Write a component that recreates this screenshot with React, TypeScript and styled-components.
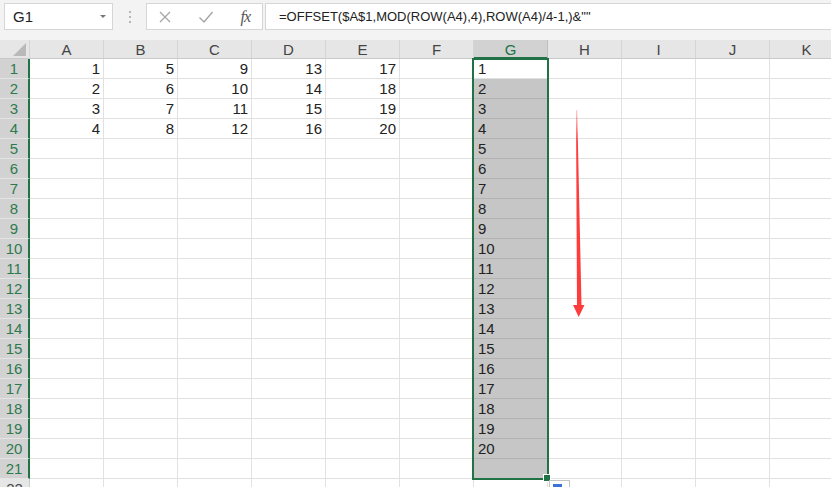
import styled, { createGlobalStyle } from 'styled-components'

const COLS = ['A', 'B', 'C', 'D', 'E', 'F', 'G', 'H', 'I', 'J', 'K']
const ROW_COUNT = 22
const SEL_COL = 'G'
const SEL_LAST_ROW = 21
const GREEN = '#217346'

const GlobalStyles = createGlobalStyle`
  html, body {
    margin: 0;
    padding: 0;
    background: #ffffff;
    overflow: hidden;
    font-family: "Liberation Sans", Arial, sans-serif;
  }
`

const Page = styled.div`
  width: 831px;
  height: 487px;
  overflow: hidden;
  display: flex;
  flex-direction: column;
`

const Toolbar = styled.div`
  height: 40px;
  flex: none;
  background: #f3f3f3;
  display: flex;
  align-items: flex-start;
  padding: 3px 0 0 4px;
  box-sizing: border-box;
`

const Field = styled.div`
  height: 27px;
  box-sizing: border-box;
  background: #ffffff;
  border: 1px solid #d6d6d6;
  display: flex;
  align-items: center;
`

const NameBox = styled(Field)`
  width: 109px;
  padding: 0 6px 0 8px;
  justify-content: space-between;
  font-size: 15px;
  color: #222;
`

const Caret = styled.span`
  width: 0;
  height: 0;
  border-left: 3px solid transparent;
  border-right: 3px solid transparent;
  border-top: 3px solid #777;
`

const Grip = styled.div`
  width: 33px;
  height: 27px;
  display: flex;
  flex-direction: column;
  align-items: center;
  justify-content: center;
  gap: 3px;

  span {
    width: 2px;
    height: 2px;
    background: #b5b5b5;
  }
`

const FxButtons = styled(Field)`
  width: 117px;
  padding: 0 12px 0 11px;
  justify-content: space-between;
  color: #9d9d9d;
`

const FxLabel = styled.span`
  font-family: "Liberation Serif", "Times New Roman", serif;
  font-style: italic;
  font-size: 16px;
  color: #555;
  letter-spacing: -1px;
`

const FormulaInput = styled(Field)`
  flex: 1;
  margin-left: 2px;
  padding-left: 13px;
  font-size: 13px;
  color: #222;
  border-right: none;
`

const Sheet = styled.div`
  position: relative;
  flex: 1;
  display: grid;
  grid-template-columns: 30px repeat(11, 74px);
  grid-template-rows: 19px;
  grid-auto-rows: 20px;
  font-size: 15px;
`

const Corner = styled.div`
  position: relative;
  background: #e6e6e6;
  border-right: 1px solid #d4d4d4;
  border-bottom: 1px solid #c9c9c9;
  box-sizing: border-box;

  &::after {
    content: '';
    position: absolute;
    right: 3px;
    bottom: 2px;
    width: 0;
    height: 0;
    border-left: 13px solid transparent;
    border-bottom: 13px solid #b9b9b9;
  }
`

const ColHeader = styled.div<{ $active?: boolean }>`
  box-sizing: border-box;
  display: flex;
  align-items: center;
  justify-content: center;
  background: ${p => (p.$active ? '#d2d2d2' : '#e6e6e6')};
  color: ${p => (p.$active ? GREEN : '#444')};
  border-right: 1px solid ${p => (p.$active ? '#bdbdbd' : '#d4d4d4')};
  border-bottom: ${p => (p.$active ? `2px solid ${GREEN}` : '1px solid #c9c9c9')};
  padding-top: ${p => (p.$active ? '1px' : '0')};
`

const RowHeader = styled.div<{ $active?: boolean }>`
  box-sizing: border-box;
  display: flex;
  align-items: flex-end;
  justify-content: center;
  padding-bottom: 1px;
  background: ${p => (p.$active ? '#d2d2d2' : '#e6e6e6')};
  color: ${p => (p.$active ? '#2e7a4f' : '#444')};
  border-bottom: 1px solid ${p => (p.$active ? '#e4e4e4' : '#d4d4d4')};
  border-right: ${p => (p.$active ? `2px solid ${GREEN}` : '1px solid #c9c9c9')};
`

const Cell = styled.div<{ $shaded?: boolean; $left?: boolean }>`
  box-sizing: border-box;
  display: flex;
  align-items: flex-end;
  justify-content: ${p => (p.$left ? 'flex-start' : 'flex-end')};
  padding: 0 3px 1px 4px;
  color: #222;
  background: ${p => (p.$shaded ? '#c6c6c6' : '#ffffff')};
  border-right: 1px solid ${p => (p.$shaded ? '#c6c6c6' : '#e1e1e1')};
  border-bottom: 1px solid ${p => (p.$shaded ? '#b3b3b3' : '#e1e1e1')};
`

const Selection = styled.div`
  position: absolute;
  left: 472px;
  top: 18px;
  width: 77px;
  height: 422px;
  box-sizing: border-box;
  border: 2px solid ${GREEN};
  pointer-events: none;
`

const FillHandle = styled.div`
  position: absolute;
  right: -4px;
  bottom: -4px;
  width: 6px;
  height: 6px;
  background: ${GREEN};
  border: 1px solid #ffffff;
`

const PasteOptions = styled.div`
  position: absolute;
  left: 549px;
  top: 440px;
  width: 21px;
  height: 20px;
  box-sizing: border-box;
  background: #ffffff;
  border: 1px solid #c4c4c4;

  &::before {
    content: '';
    position: absolute;
    left: 3px;
    top: 3px;
    width: 9px;
    height: 4px;
    background: #3b73d9;
  }
`

const Arrow = styled.svg`
  position: absolute;
  left: 570px;
  top: 70px;
  overflow: visible;
`

const cellValue = (col: string, row: number): string => {
  const idx = COLS.indexOf(col)
  if (idx <= 4 && row <= 4) return String(row + idx * 4)
  if (col === SEL_COL && row <= 20) return String(row)
  return ''
}

const App = () => {
  const rows = Array.from({ length: ROW_COUNT }, (_, i) => i + 1)

  return (
    <>
      <GlobalStyles />
      <Page>
        <Toolbar>
          <NameBox>
            G1
            <Caret />
          </NameBox>
          <Grip>
            <span />
            <span />
            <span />
          </Grip>
          <FxButtons>
            <svg width="14" height="14" viewBox="0 0 14 14">
              <path d="M2 2 L12 12 M12 2 L2 12" stroke="#a5a5a5" strokeWidth="1.3" fill="none" />
            </svg>
            <svg width="16" height="14" viewBox="0 0 16 14">
              <path d="M1.5 7.5 L6 12 L14.5 2" stroke="#a5a5a5" strokeWidth="1.4" fill="none" />
            </svg>
            <FxLabel>fx</FxLabel>
          </FxButtons>
          <FormulaInput>=OFFSET($A$1,MOD(ROW(A4),4),ROW(A4)/4-1,)&amp;""</FormulaInput>
        </Toolbar>
        <Sheet>
          <Corner />
          {COLS.map(c => (
            <ColHeader key={c} $active={c === SEL_COL}>
              {c}
            </ColHeader>
          ))}
          {rows.map(r => (
            <Row key={r} row={r} />
          ))}
          <Selection>
            <FillHandle />
          </Selection>
          <PasteOptions />
          <Arrow width="18" height="207" viewBox="0 0 18 207">
            <defs>
              <linearGradient id="arrowFade" x1="0" y1="0" x2="0" y2="1">
                <stop offset="0" stopColor="#ff3c3c" stopOpacity="0.25" />
                <stop offset="0.15" stopColor="#ff3c3c" stopOpacity="1" />
                <stop offset="1" stopColor="#ff3c3c" stopOpacity="1" />
              </linearGradient>
            </defs>
            <polygon
              points="6,0 7.2,0 11.5,195 14.5,195 8.7,207 3,195 7,195"
              fill="url(#arrowFade)"
            />
          </Arrow>
        </Sheet>
      </Page>
    </>
  )
}

const Row = ({ row }: { row: number }) => {
  const active = row <= SEL_LAST_ROW
  return (
    <>
      <RowHeader $active={active}>{row}</RowHeader>
      {COLS.map(c => {
        const inSel = c === SEL_COL && active
        return (
          <Cell key={c} $shaded={inSel && row > 1} $left={c === SEL_COL}>
            {cellValue(c, row)}
          </Cell>
        )
      })}
    </>
  )
}

export default App
